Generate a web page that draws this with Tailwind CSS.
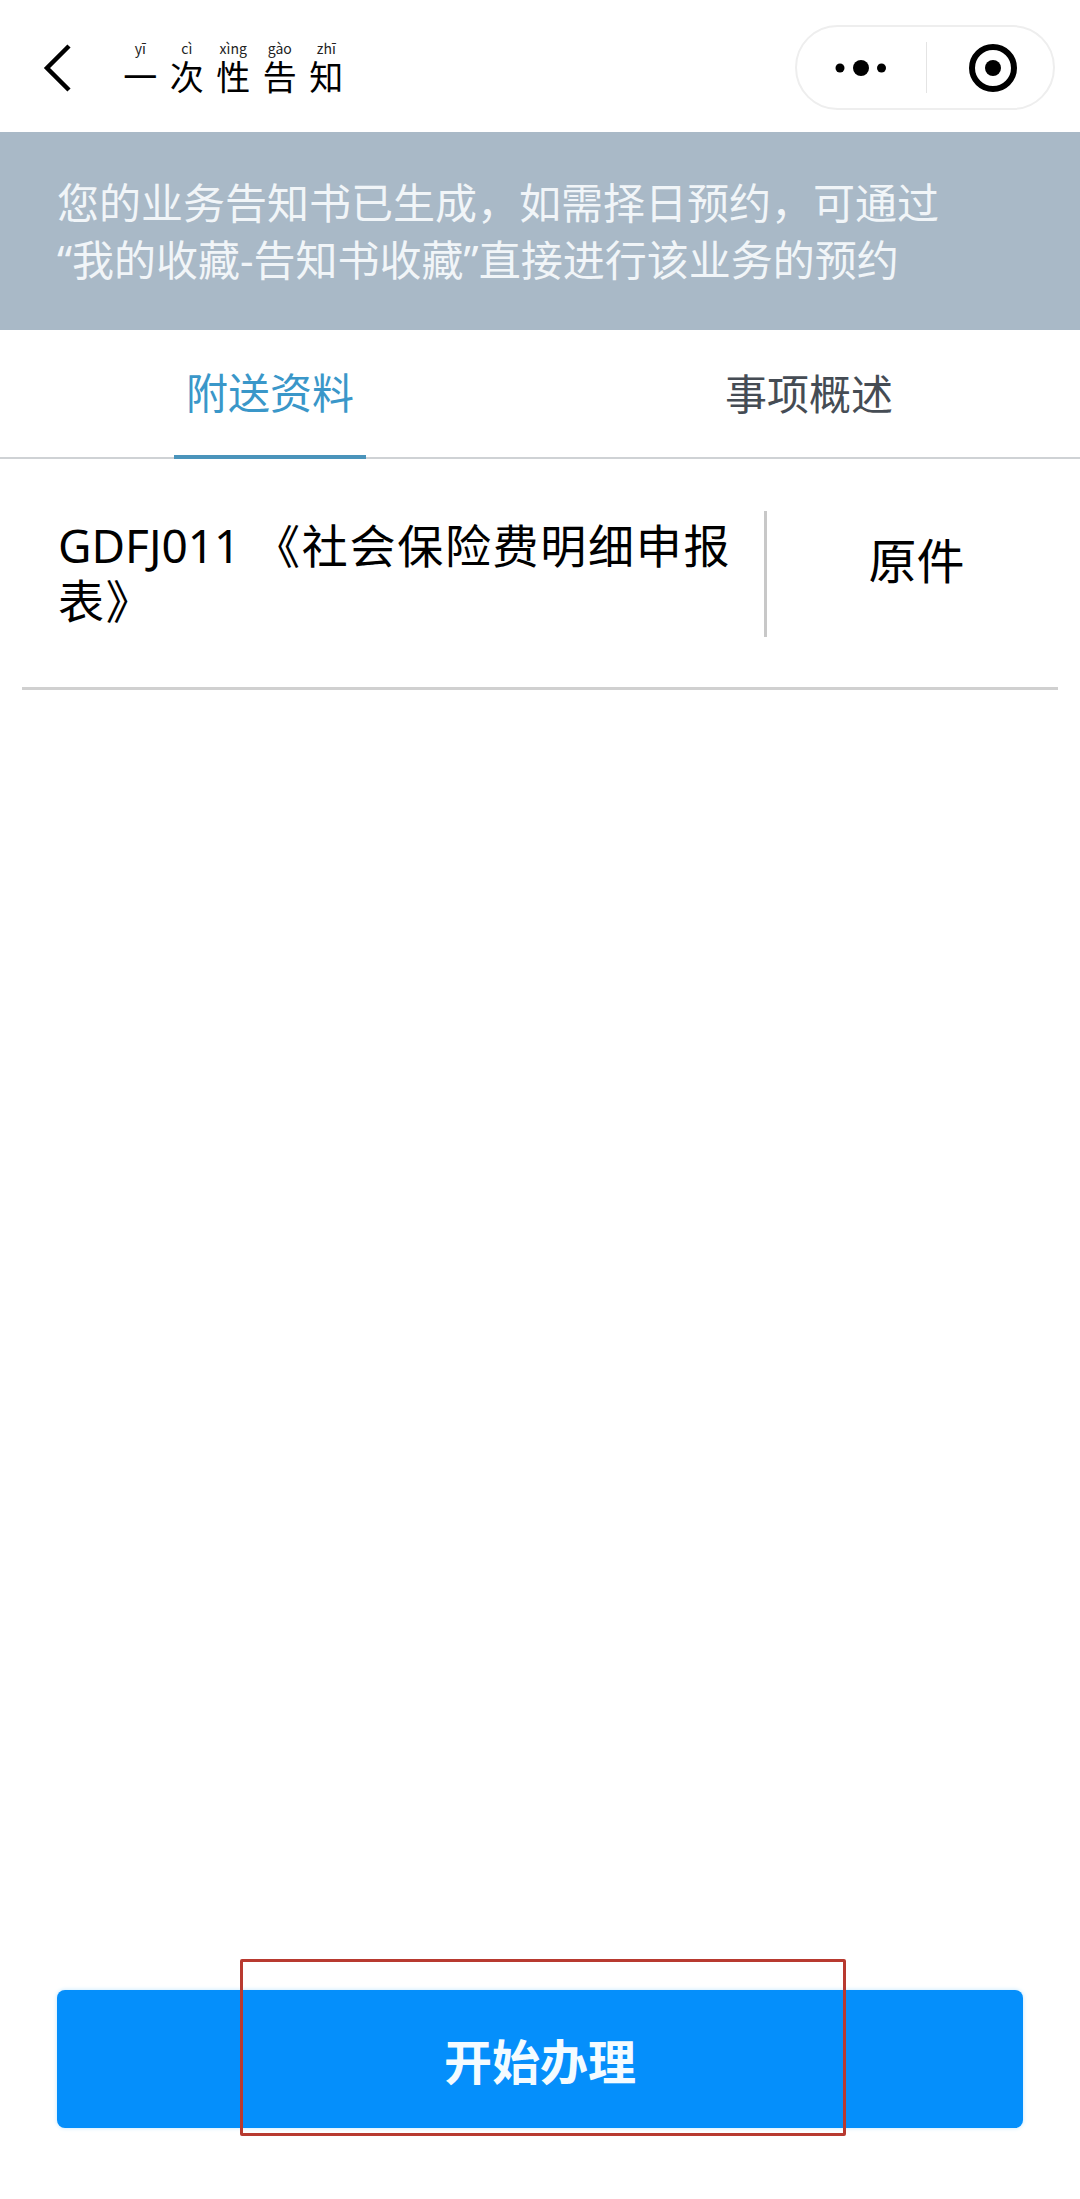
<!DOCTYPE html>
<html lang="zh-CN">
<head>
<meta charset="utf-8">
<script src="https://cdn.jsdelivr.net/npm/@tailwindcss/browser@4"></script>
</head>
<body class="bg-white">
<div class="relative flex h-[2199px] w-[1080px] flex-col overflow-hidden bg-white font-['Noto_Sans','Noto_Sans_CJK_SC',sans-serif]">
  <header class="flex h-[132px] items-center">
    <svg class="ml-[42px] mt-[3px] h-[50px] w-[32px]" viewBox="0 0 32 50" fill="none" stroke="#000" stroke-width="4.5"><path d="M27 3 L5 25 L27 47"/></svg>
    <div class="ml-[43px] mt-[2px] flex font-['Noto_Sans_CJK_SC',sans-serif] text-black">
      <div class="flex w-[46.5px] flex-col items-center"><span class="h-[18px] text-[14px] leading-[18px] text-[#222]">yī</span><span class="h-[38px] text-[34px] leading-[38px]">一</span></div>
      <div class="flex w-[46.5px] flex-col items-center"><span class="h-[18px] text-[14px] leading-[18px] text-[#222]">cì</span><span class="h-[38px] text-[34px] leading-[38px]">次</span></div>
      <div class="flex w-[46.5px] flex-col items-center"><span class="h-[18px] text-[14px] leading-[18px] text-[#222]">xìng</span><span class="h-[38px] text-[34px] leading-[38px]">性</span></div>
      <div class="flex w-[46.5px] flex-col items-center"><span class="h-[18px] text-[14px] leading-[18px] text-[#222]">gào</span><span class="h-[38px] text-[34px] leading-[38px]">告</span></div>
      <div class="flex w-[46.5px] flex-col items-center"><span class="h-[18px] text-[14px] leading-[18px] text-[#222]">zhī</span><span class="h-[38px] text-[34px] leading-[38px]">知</span></div>
    </div>
    <div class="ml-auto mr-[25px] mt-[3px] flex h-[85px] w-[260px] items-center rounded-full border-2 border-[#eeeeee]">
      <div class="flex h-full w-[129px] items-center justify-center">
        <svg class="h-[20px] w-[56px]" viewBox="0 0 56 20" fill="#000"><circle cx="6" cy="10" r="4.5"/><circle cx="27" cy="10" r="8"/><circle cx="47.5" cy="10" r="4.5"/></svg>
      </div>
      <div class="h-[51px] w-[1px] bg-[#e4e4e4]"></div>
      <div class="flex h-full flex-1 items-center justify-center pl-[5px]">
        <svg class="h-[48px] w-[48px]" viewBox="0 0 48 48"><circle cx="24" cy="24" r="21" fill="none" stroke="#000" stroke-width="6"/><circle cx="24" cy="24" r="8" fill="#000"/></svg>
      </div>
    </div>
  </header>

  <section class="h-[198px] bg-[#a9b9c7] pl-[57px] pt-[42px] text-[42px] leading-[57px] text-[#f1f5f8]">
    <p class="whitespace-nowrap">您的业务告知书已生成，如需择日预约，可通过</p>
    <p class="whitespace-nowrap">“我的收藏-告知书收藏”直接进行该业务的预约</p>
  </section>

  <nav class="flex h-[129px] border-b-2 border-[#cfd2d5] text-[42px]">
    <div class="w-[174px] shrink-0"></div>
    <div class="mb-[-2px] flex w-[192px] items-center justify-center border-b-[4px] border-[#4a94bb] text-[#3a97c9]"><span class="whitespace-nowrap">附送资料</span></div>
    <div class="flex flex-1 items-center justify-center pb-[1px] pl-[172px] text-[#454c54]"><span class="whitespace-nowrap">事项概述</span></div>
  </nav>

  <section class="mx-[22px] flex h-[231px] items-start border-b-[3px] border-[#d0d0d0] pt-[52px]">
    <p class="h-[126px] w-[745px] shrink-0 border-r-[3px] border-[#c8c8c8] pl-[36px] pr-[27px] pt-[7px] text-[46px] leading-[55px] tracking-[1.7px] text-black"><span class="tracking-normal">GDFJ011</span> 《社会保险费明细申报表》</p>
    <div class="flex h-[126px] flex-1 items-center justify-center text-[48px] text-black"><span class="mb-[26px] ml-[8px] whitespace-nowrap">原件</span></div>
  </section>

  <div class="mx-[57px] mb-[71px] mt-auto flex h-[138px] items-center justify-center rounded-[8px] bg-[#058ffb] pt-[5px] text-[48px] font-bold text-[#f4fbff] shadow-[0_0_4px_#bfe6ff]">
    <span class="whitespace-nowrap">开始办理</span>
  </div>

  <div class="absolute left-[240px] top-[1959px] h-[177px] w-[606px] rounded-[2px] border-[3px] border-[#b83a30]"></div>
</div>
</body>
</html>
